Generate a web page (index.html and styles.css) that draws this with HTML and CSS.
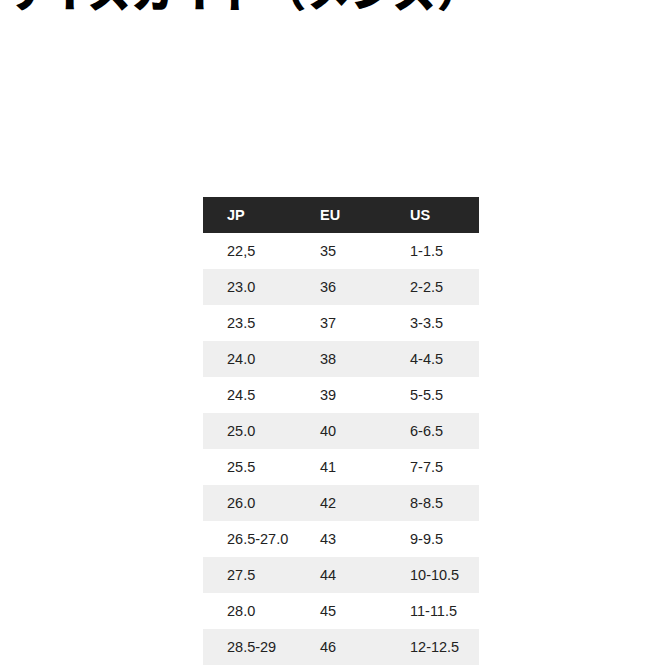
FILE: index.html
```html
<!DOCTYPE html>
<html>
<head><meta charset="utf-8"><link rel="stylesheet" href="styles.css"></head>
<body>
<h1 class="title">サイズガイド（メンズ）</h1>
<table class="sizes">
<thead><tr><th>JP</th><th>EU</th><th>US</th></tr></thead>
<tbody>
<tr><td>22,5</td><td>35</td><td>1-1.5</td></tr>
<tr><td>23.0</td><td>36</td><td>2-2.5</td></tr>
<tr><td>23.5</td><td>37</td><td>3-3.5</td></tr>
<tr><td>24.0</td><td>38</td><td>4-4.5</td></tr>
<tr><td>24.5</td><td>39</td><td>5-5.5</td></tr>
<tr><td>25.0</td><td>40</td><td>6-6.5</td></tr>
<tr><td>25.5</td><td>41</td><td>7-7.5</td></tr>
<tr><td>26.0</td><td>42</td><td>8-8.5</td></tr>
<tr><td>26.5-27.0</td><td>43</td><td>9-9.5</td></tr>
<tr><td>27.5</td><td>44</td><td>10-10.5</td></tr>
<tr><td>28.0</td><td>45</td><td>11-11.5</td></tr>
<tr><td>28.5-29</td><td>46</td><td>12-12.5</td></tr>
</tbody>
</table>
</body>
</html>
```
FILE: styles.css
```css
html, body { margin: 0; padding: 0; background: #fff; }
body { width: 672px; height: 672px; overflow: hidden; font-family: "Liberation Sans", Arial, sans-serif; }
.title {
  margin: -38px 0 0 2px;
  font-family: "Noto Sans CJK JP", sans-serif;
  font-weight: 900;
  font-size: 43.7px;
  line-height: 52px;
  height: 52px;
  color: #000;
  white-space: nowrap;
}
.sizes {
  margin: 183px 0 0 203px;
  width: 276px;
  border-collapse: collapse;
  font-size: 14.5px;
  color: #222;
}
.sizes th {
  background: #262626;
  color: #fff;
  font-weight: bold;
  text-align: left;
  height: 36px;
  padding: 0;
}
.sizes td { height: 36px; padding: 0; }
.sizes th:first-child, .sizes td:first-child { padding-left: 24px; width: 93px; }
.sizes th:nth-child(2), .sizes td:nth-child(2) { width: 90px; }
.sizes tbody tr:nth-child(even) td { background: #efefef; }
```
